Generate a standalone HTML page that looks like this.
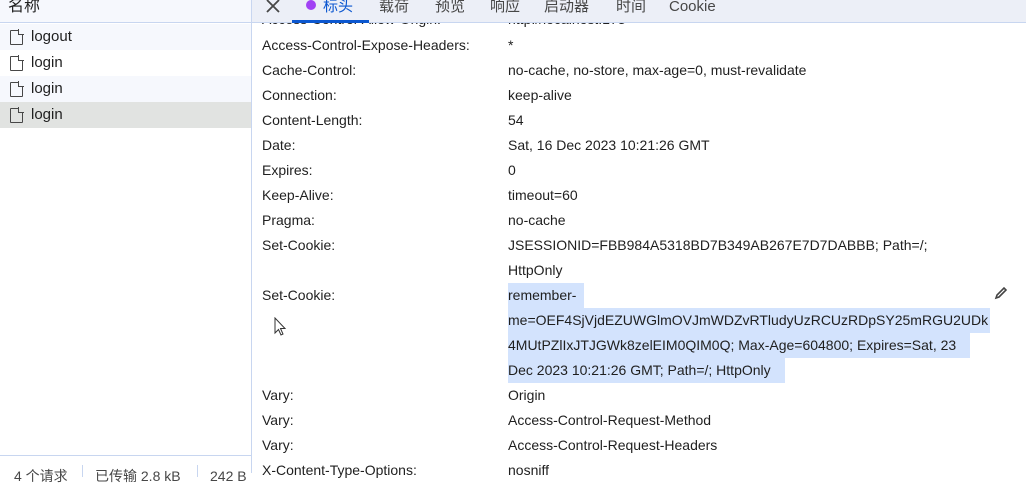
<!DOCTYPE html>
<html><head><meta charset="utf-8"><style>
*{margin:0;padding:0;box-sizing:border-box}
body{width:1026px;height:473px;overflow:hidden;background:#fff;font-family:"Liberation Sans","Noto Sans CJK SC",sans-serif;font-size:14px;color:#1f1f1f;position:relative}
.a{position:absolute;white-space:nowrap;line-height:25px}
.lhdr{position:absolute;left:0;top:0;width:251px;height:23px;background:#f6f8fd;border-bottom:1px solid #c8d6f0}
.rhdr{position:absolute;left:252px;top:0;width:774px;height:23px;background:#eceff7;border-bottom:1px solid #c8d6f0}
.vline{position:absolute;left:251px;top:0;width:1px;height:473px;background:#c8d6f0}
.row{position:absolute;left:0;width:251px;height:26px;font-size:15px}
.ic{position:absolute;left:10px;top:6px;width:13px;height:15px;border:1.5px solid #474747;border-radius:1px}
.ic:after{content:"";position:absolute;right:-2px;top:-2px;width:5px;height:5px;background:inherit;border-left:1.5px solid #474747;border-bottom:1.5px solid #474747}
.sel{position:absolute;left:508px;height:25px;background:#d3e3fd}
.tab{position:absolute;top:-3px;line-height:20px;color:#474747;font-size:15px}
</style></head><body>
<div class="lhdr"><span class="a" style="left:8px;top:-6px;font-size:16px">名称</span></div>
<div class="row" style="top:24px;background:#f6f8fd"><div class="ic" style="background:#f6f8fd"></div><span class="a" style="left:31px;top:0">logout</span></div>
<div class="row" style="top:50px;background:#fff"><div class="ic" style="background:#fff"></div><span class="a" style="left:31px;top:0">login</span></div>
<div class="row" style="top:76px;background:#f6f8fd"><div class="ic" style="background:#f6f8fd"></div><span class="a" style="left:31px;top:0">login</span></div>
<div class="row" style="top:102px;background:#e1e3e1"><div class="ic" style="background:#e1e3e1"></div><span class="a" style="left:31px;top:0">login</span></div>
<div style="position:absolute;left:0;top:455px;width:251px;height:1px;background:#c8d6f0"></div>
<span class="a" style="left:14px;top:464px;color:#474747">4 个请求</span>
<div style="position:absolute;left:82px;top:465px;width:1px;height:12px;background:#c8d6f0"></div>
<span class="a" style="left:95px;top:464px;color:#474747">已传输 2.8 kB</span>
<div style="position:absolute;left:197px;top:465px;width:1px;height:12px;background:#c8d6f0"></div>
<span class="a" style="left:210px;top:464px;color:#474747">242 B</span>

<div class="sel" style="top:283px;width:76px"></div>
<div class="sel" style="top:308px;width:482px"></div>
<div class="sel" style="top:333px;width:462px"></div>
<div class="sel" style="top:358px;width:277px"></div>

<div class="a" style="left:262px;top:7px">Access-Control-Allow-Origin:</div><div class="a" style="left:508px;top:7px">http://localhost:173</div>
<div class="a" style="left:262px;top:33px">Access-Control-Expose-Headers:</div><div class="a" style="left:508px;top:33px">*</div>
<div class="a" style="left:262px;top:58px">Cache-Control:</div><div class="a" style="left:508px;top:58px">no-cache, no-store, max-age=0, must-revalidate</div>
<div class="a" style="left:262px;top:83px">Connection:</div><div class="a" style="left:508px;top:83px">keep-alive</div>
<div class="a" style="left:262px;top:108px">Content-Length:</div><div class="a" style="left:508px;top:108px">54</div>
<div class="a" style="left:262px;top:133px">Date:</div><div class="a" style="left:508px;top:133px">Sat, 16 Dec 2023 10:21:26 GMT</div>
<div class="a" style="left:262px;top:158px">Expires:</div><div class="a" style="left:508px;top:158px">0</div>
<div class="a" style="left:262px;top:183px">Keep-Alive:</div><div class="a" style="left:508px;top:183px">timeout=60</div>
<div class="a" style="left:262px;top:208px">Pragma:</div><div class="a" style="left:508px;top:208px">no-cache</div>
<div class="a" style="left:262px;top:233px">Set-Cookie:</div><div class="a" style="left:508px;top:233px">JSESSIONID=FBB984A5318BD7B349AB267E7D7DABBB; Path=/;</div>
<div class="a" style="left:508px;top:258px">HttpOnly</div>
<div class="a" style="left:262px;top:283px">Set-Cookie:</div>
<div class="a" style="left:508px;top:283px">remember-</div>
<div class="a" style="left:508px;top:308px">me=OEF4SjVjdEZUWGlmOVJmWDZvRTludyUzRCUzRDpSY25mRGU2UDk</div>
<div class="a" style="left:508px;top:333px">4MUtPZlIxJTJGWk8zelEIM0QIM0Q; Max-Age=604800; Expires=Sat, 23</div>
<div class="a" style="left:508px;top:358px">Dec 2023 10:21:26 GMT; Path=/; HttpOnly</div>
<div class="a" style="left:262px;top:383px">Vary:</div><div class="a" style="left:508px;top:383px">Origin</div>
<div class="a" style="left:262px;top:408px">Vary:</div><div class="a" style="left:508px;top:408px">Access-Control-Request-Method</div>
<div class="a" style="left:262px;top:433px">Vary:</div><div class="a" style="left:508px;top:433px">Access-Control-Request-Headers</div>
<div class="a" style="left:262px;top:458px">X-Content-Type-Options:</div><div class="a" style="left:508px;top:458px">nosniff</div>

<svg style="position:absolute;left:993px;top:285px" width="16" height="16" viewBox="0 0 16 16"><path d="M3 13 L4 10 L11 3 L13 5 L6 12 Z" fill="none" stroke="#444" stroke-width="1.6"/></svg>
<svg style="position:absolute;left:274px;top:317px" width="14" height="20" viewBox="0 0 14 20"><path d="M1 1 L1 16 L4.5 12.5 L7 18 L9 17 L6.5 11.5 L11 11.5 Z" fill="#fff" stroke="#333" stroke-width="1"/></svg>

<div class="rhdr">
<svg style="position:absolute;left:14px;top:-1px" width="14" height="14" viewBox="0 0 14 14"><path d="M1 1L13 13M13 1L1 13" stroke="#474747" stroke-width="1.8"/></svg>
<div style="position:absolute;left:54px;top:0;width:10px;height:10px;border-radius:50%;background:#a142f4"></div>
<span class="tab" style="left:71px;color:#0b57d0">标头</span>
<div style="position:absolute;left:40px;top:20px;width:77px;height:3px;background:#0b57d0"></div>
<span class="tab" style="left:127px">载荷</span>
<span class="tab" style="left:183px">预览</span>
<span class="tab" style="left:238px">响应</span>
<span class="tab" style="left:292px">启动器</span>
<span class="tab" style="left:364px">时间</span>
<span class="tab" style="left:417px">Cookie</span>
</div>
<div class="vline"></div>
</body></html>
